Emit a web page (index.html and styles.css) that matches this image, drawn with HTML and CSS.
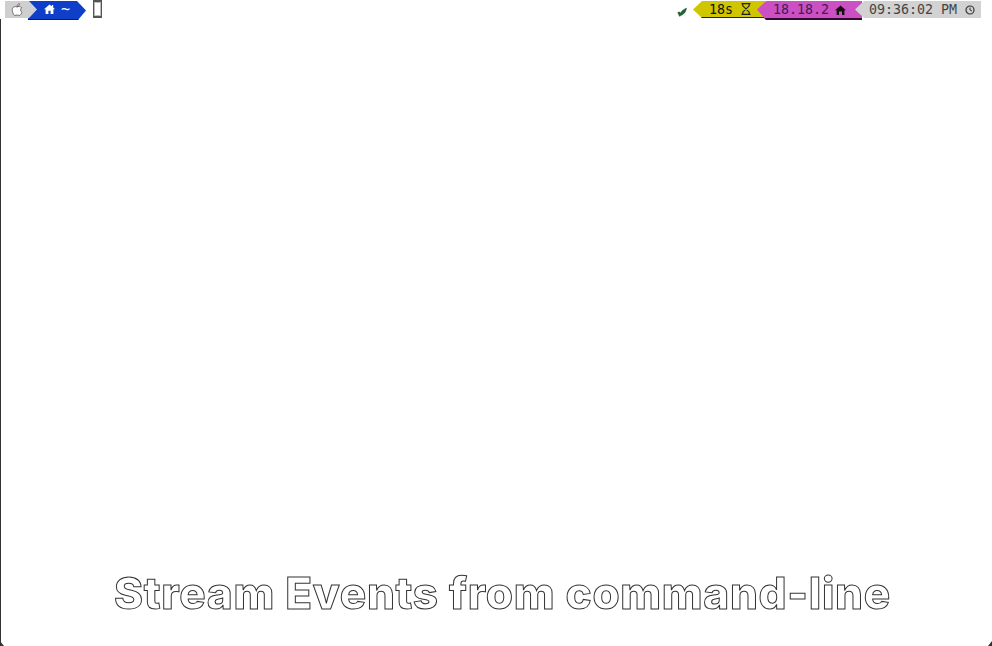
FILE: index.html

```html
<!DOCTYPE html>
<html lang="en">
<head>
  <meta charset="UTF-8">
  <title>Stream Events from command-line</title>
  <link rel="stylesheet" href="styles.css">
</head>
<body>
  <div class="screen">
    <div class="prompt">
      <div class="prompt-left">
        <div class="seg seg-os">
          <svg class="icon" width="14" height="14" viewBox="0 0 14 14"><path fill="#fff" stroke="#555" stroke-width=".8" d="M7 4C5.800 3.300 3.300 3.300 2.500 5.500 1.800 7.800 3.300 12.500 5 12.500 5.900 12.500 6.200 12 7 12S8.400 12.500 9.200 12.500C10.500 12.500 11.500 10.500 12 9.300 10.300 8.500 10 5.800 11.800 4.800 10.800 3.300 8.500 3.300 7 4ZM7 3.500C7 2 8 .9 9.500 .8 9.600 2.300 8.500 3.500 7 3.500Z"/></svg>
        </div>
        <div class="seg seg-dir">
          <svg class="icon" width="11" height="10" viewBox="0 0 11 10"><path fill="#fff" d="M5.500 .5 0 5.200h1.600V10h2.800V6.800h2.200V10h2.800V5.200H11L9.200 3.600V1H7.800v1.300Z"/></svg>
          <span class="tilde">~</span>
        </div>
        <div class="cursor"></div>
      </div>
      <div class="prompt-right">
        <svg class="check" width="10" height="10" viewBox="0 0 10 10"><path fill="#1c6b2a" stroke="#0f3318" stroke-width=".5" d="M.8 5.500 2.600 5 3.400 6.300C4.500 4 6.800 2.300 9.500 1.200 8.800 4.500 7 7.500 4.200 8.300L2.500 9.300Z"/></svg>
        <div class="seg seg-time">
          <span>18s</span>
          <svg class="icon" width="10" height="12" viewBox="0 0 10 12"><path fill="none" stroke="#222" stroke-width="1.200" d="M.5 .6h9M.5 11.400h9M1.800 .6v2.200L8.200 9.200v2.200M8.200 .6v2.200L1.800 9.200v2.200"/></svg>
        </div>
        <div class="seg seg-node">
          <span>18.18.2</span>
          <svg class="icon" width="11" height="10" viewBox="0 0 11 10"><path fill="#111" d="M5.500 .5 0 5.200h1.600V10h2.400V6.500h3V10h2.400V5.200H11Z"/></svg>
        </div>
        <div class="seg seg-clock">
          <span>09:36:02 PM</span>
          <svg class="icon" width="10" height="10" viewBox="0 0 10 10"><circle cx="5" cy="5" r="4" fill="none" stroke="#333" stroke-width="1.200"/><path fill="none" stroke="#333" d="M5 2.500V5l2 1"/></svg>
        </div>
      </div>
    </div>
    <div class="frame">
      <h1 class="caption">Stream Events from command-line</h1>
      <span class="corner corner-left"></span>
      <span class="corner corner-right"></span>
    </div>
  </div>
</body>
</html>
```

FILE: styles.css

```css
html, body {
  margin: 0;
  height: 100%;
  background: #fff;
  overflow: hidden;
}
.screen {
  height: 646px;
  display: flex;
  flex-direction: column;
  font-family: "DejaVu Sans Mono", monospace;
  font-size: 13.3px;
}
.prompt {
  display: flex;
  justify-content: space-between;
  height: 19px;
  padding: 0 11px 0 5px;
}
.prompt-left, .prompt-right {
  display: flex;
  align-items: flex-start;
  padding-top: 1px;
}
.seg {
  display: flex;
  align-items: center;
  height: 17px;
  box-sizing: border-box;
}
.icon {
  display: block;
  flex: none;
}
.seg-os {
  width: 32px;
  padding-left: 5px;
  background: #cfcfcf;
  clip-path: polygon(0 0, 24px 0, 32px 50%, 24px 100%, 0 100%);
  margin-right: -9px;
  position: relative;
  z-index: 1;
}
.seg-dir {
  width: 58px;
  height: 19px;
  padding: 0 0 2px 16px;
  gap: 6px;
  background: #0f3fc8;
  color: #fff;
  border-bottom: 1px solid #0a1a55;
  clip-path: polygon(0 0, 49px 0, 58px 50%, 50px 100%, 0 100%);
}
.tilde {
  font-size: 15px;
}
.cursor {
  width: 9px;
  height: 18px;
  margin: -1px 0 0 7px;
  border: 1px solid #555;
  border-top-width: 2px;
  border-bottom-width: 2px;
  box-sizing: border-box;
  box-shadow: inset 0 0 0 1px #bbb;
}
.check {
  margin: 6px 6px 0 0;
}
.seg-time {
  width: 72px;
  padding-left: 16px;
  gap: 8px;
  background: #cfc600;
  color: #111;
  border-bottom: 1px solid #222;
  clip-path: polygon(9px 0, 100% 0, 100% 100%, 9px 100%, 0 50%);
}
.seg-node {
  width: 105px;
  margin-left: -8px;
  padding-left: 16px;
  gap: 6px;
  background: #cc4fc4;
  color: #3f1d55;
  border-bottom: 2px solid #300a30;
  height: 19px;
  clip-path: polygon(9px 0, 100% 0, 100% 100%, 9px 100%, 0 8.500px);
}
.seg-clock {
  width: 126px;
  margin-left: -7px;
  padding-left: 14px;
  gap: 8px;
  background: #d2d2d2;
  color: #444;
  clip-path: polygon(9px 0, 100% 0, 100% 100%, 9px 100%, 0 50%);
}
.frame {
  position: relative;
  flex: 1;
  display: flex;
  align-items: flex-end;
  justify-content: center;
  border-left: 1px solid #333;
}
.caption {
  margin: 0 0 28px 12px;
  font-family: Inter, sans-serif;
  font-size: 44px;
  font-weight: 800;
  letter-spacing: .7px;
  line-height: 50px;
  color: #fff;
  -webkit-text-stroke: 1px #333;
  will-change: opacity;
}
.corner {
  position: absolute;
  bottom: 0;
  width: 4px;
  height: 5px;
  background: #333;
}
.corner-left {
  left: -1px;
  clip-path: polygon(0 0, 100% 100%, 0 100%);
}
.corner-right {
  right: 0;
  clip-path: polygon(100% 0, 100% 100%, 0 100%);
}
```
